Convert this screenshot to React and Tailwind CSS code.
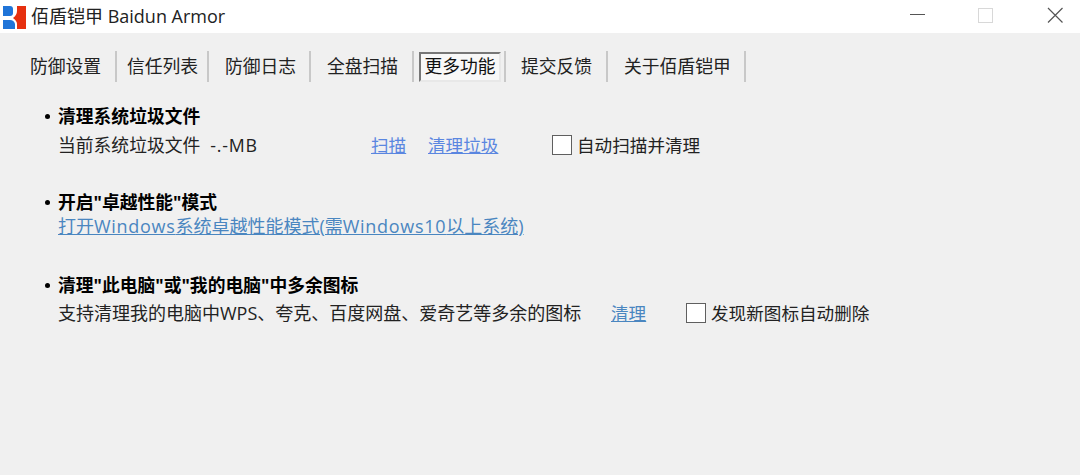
const font = { fontFamily: '"Open Sans", "Noto Sans CJK SC", sans-serif' }

const tabs = [
  { name: '防御设置', w: 'w-[87px]' },
  { name: '信任列表', w: 'w-[92px] pl-[10px]' },
  { name: '防御日志', w: 'w-[102px] pl-[16px]' },
  { name: '全盘扫描', w: 'w-[103px] pl-[16px]' },
  { name: '更多功能', w: 'w-[92px]', active: true },
  { name: '提交反馈', w: 'w-[102px] pl-[15px]' },
  { name: '关于佰盾铠甲', w: 'w-[138px] pl-[16px]' },
]

function Logo() {
  return (
    <svg width="24" height="27" viewBox="0 0 24 27" className="ml-[3px]">
      <path d="M0 3h7q3 0 3 3v4q0 3-3 3H0z" fill="#1f74d8" />
      <path d="M0 17h7q4 0 5 4v5H0z" fill="#1f74d8" />
      <path d="M14 3h9v23h-9v-5q0-3-4-6 4-3 4-7z" fill="#e6300f" />
    </svg>
  )
}

function Checkbox({ label }) {
  return (
    <span className="flex items-center gap-[5px] text-[17.6px]">
      <span className="w-[20px] h-[20px] bg-white border border-[#5f5f5f]"></span>
      {label}
    </span>
  )
}

function Bullet({ children }) {
  return (
    <div className="flex items-center h-[24px] font-bold text-black text-[17.8px]">
      <span className="w-[5px] h-[5px] rounded-full bg-black ml-[45px] mr-[8px]"></span>
      {children}
    </div>
  )
}

export default function App() {
  return (
    <div className="w-[1080px] h-[475px] bg-[#f0f0f0] overflow-hidden text-[#222] text-[18px]" style={font}>
      <div className="h-[33px] bg-white flex items-center justify-between">
        <div className="flex items-center gap-[4px] text-[18px] text-[#222]">
          <Logo />
          <span>佰盾铠甲 Baidun Armor</span>
        </div>
        <div className="flex items-center">
          <svg width="180" height="33" viewBox="0 0 180 33">
            <path d="M10 14.500h15" stroke="#555" strokeWidth="1" fill="none" />
            <rect x="78.500" y="8.500" width="14" height="14" stroke="#d8d8d8" strokeWidth="1" fill="none" />
            <path d="M148 8l14.500 14.500M162.500 8L148 22.500" stroke="#555" strokeWidth="1.200" fill="none" />
          </svg>
        </div>
      </div>

      <div className="flex h-[31px] mt-[18px] pl-[30px]">
        {tabs.map((t) => (
          <div key={t.name} className={`${t.w} flex items-center border-r-2 border-[#c8c8c8] text-[17.8px]`}>
            {t.active ? (
              <span className="ml-[5px] h-[30px] w-[82px] flex items-center justify-center bg-[#f8f8f8] border-2 border-t-[#777] border-l-[#777] border-r-[#e8e8e8] border-b-[#e8e8e8] text-[#111] whitespace-nowrap">
                {t.name}
              </span>
            ) : (
              <span className="whitespace-nowrap">{t.name}</span>
            )}
          </div>
        ))}
      </div>

      <div className="mt-[22px]">
        <Bullet>清理系统垃圾文件</Bullet>
        <div className="flex items-center h-[29px] pl-[58px] pt-[5px]">
          <span className="w-[313px] text-[17.8px]">当前系统垃圾文件<span className="ml-[10px] tracking-[0.8px]">-.-MB</span></span>
          <a className="w-[57px] text-[17.6px] text-[#5a86e0] underline">扫描</a>
          <a className="w-[124px] text-[17.6px] text-[#5a86e0] underline">清理垃圾</a>
          <Checkbox label="自动扫描并清理" />
        </div>

        <div className="mt-[33px]">
          <Bullet>开启"卓越性能"模式</Bullet>
          <div className="flex items-center h-[24px] pl-[58px]">
            <a className="text-[#4a86c0] underline">
              打开<span className="tracking-[0.7px]">Windows</span>系统卓越性能模式(需<span className="tracking-[0.7px]">Windows10</span>以上系统)
            </a>
          </div>
        </div>

        <div className="mt-[35px]">
          <Bullet>清理"此电脑"或"我的电脑"中多余图标</Bullet>
          <div className="flex items-center h-[30px] pl-[58px] pt-[2px]">
            <span className="w-[553px]">支持清理我的电脑中WPS、夸克、百度网盘、爱奇艺等多余的图标</span>
            <a className="w-[75px] text-[17.6px] text-[#4a86c0] underline">清理</a>
            <Checkbox label="发现新图标自动删除" />
          </div>
        </div>
      </div>
    </div>
  )
}
